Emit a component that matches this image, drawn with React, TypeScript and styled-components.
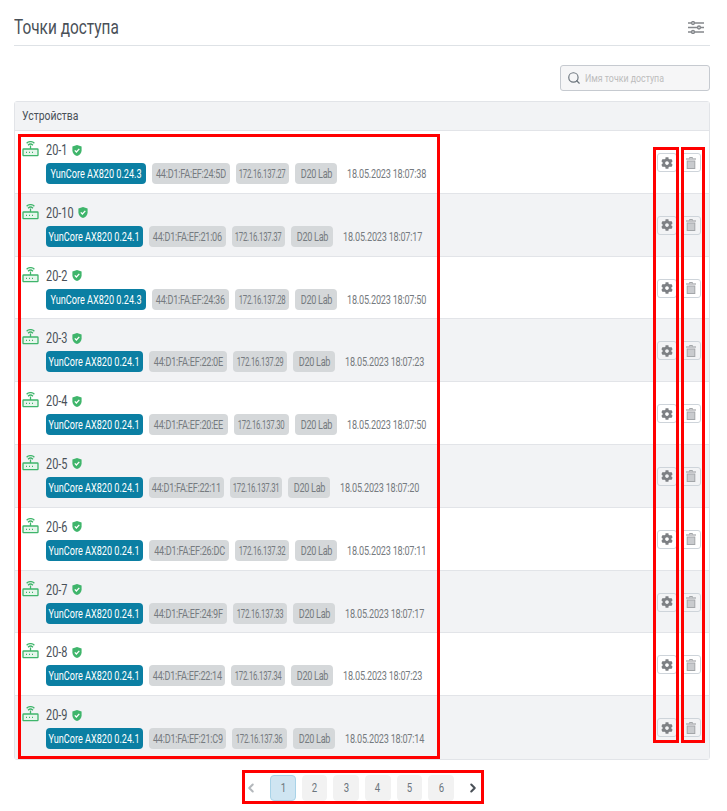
import styled, { createGlobalStyle } from 'styled-components';
import { ChevronLeft, ChevronRight, Search } from 'lucide-react';
import { FaCog } from 'react-icons/fa';

const GlobalStyle = createGlobalStyle`
    html, body {
        margin: 0;
        background: #fff;
        font-family: 'Roboto', 'Liberation Sans', sans-serif;
        color: #495057;
    }
`;

// tag widths come from the text, the digits of the original font are not all the same width
const devices = [
    { name: '20-1', fw: 'YunCore AX820 0.24.3', fwW: 100, mac: '44:D1:FA:EF:24:5D', macW: 78, ip: '172.16.137.27', ipW: 53, date: '18.05.2023 18:07:38' },
    { name: '20-10', fw: 'YunCore AX820 0.24.1', fwW: 97, mac: '44:D1:FA:EF:21:06', macW: 77, ip: '172.16.137.37', ipW: 53, date: '18.05.2023 18:07:17' },
    { name: '20-2', fw: 'YunCore AX820 0.24.3', fwW: 100, mac: '44:D1:FA:EF:24:36', macW: 77, ip: '172.16.137.28', ipW: 54, date: '18.05.2023 18:07:50' },
    { name: '20-3', fw: 'YunCore AX820 0.24.1', fwW: 97, mac: '44:D1:FA:EF:22:0E', macW: 78, ip: '172.16.137.29', ipW: 54, date: '18.05.2023 18:07:23' },
    { name: '20-4', fw: 'YunCore AX820 0.24.1', fwW: 97, mac: '44:D1:FA:EF:20:EE', macW: 79, ip: '172.16.137.30', ipW: 55, date: '18.05.2023 18:07:50' },
    { name: '20-5', fw: 'YunCore AX820 0.24.1', fwW: 97, mac: '44:D1:FA:EF:22:11', macW: 75, ip: '172.16.137.31', ipW: 52, date: '18.05.2023 18:07:20' },
    { name: '20-6', fw: 'YunCore AX820 0.24.1', fwW: 97, mac: '44:D1:FA:EF:26:DC', macW: 80, ip: '172.16.137.32', ipW: 54, date: '18.05.2023 18:07:11' },
    { name: '20-7', fw: 'YunCore AX820 0.24.1', fwW: 97, mac: '44:D1:FA:EF:24:9F', macW: 78, ip: '172.16.137.33', ipW: 54, date: '18.05.2023 18:07:17' },
    { name: '20-8', fw: 'YunCore AX820 0.24.1', fwW: 97, mac: '44:D1:FA:EF:22:14', macW: 76, ip: '172.16.137.34', ipW: 54, date: '18.05.2023 18:07:23' },
    { name: '20-9', fw: 'YunCore AX820 0.24.1', fwW: 97, mac: '44:D1:FA:EF:21:C9', macW: 77, ip: '172.16.137.36', ipW: 55, date: '18.05.2023 18:07:14' },
];

const RouterIcon = () => (
    <svg width="17" height="16" viewBox="0 0 17 16" fill="none" stroke="#3fb56b" strokeWidth="1.3">
        <rect x="1" y="8" width="15" height="6.6" rx="0.6" fill="#e6f6ec" />
        <path d="M8.5 8V4.5" />
        <path d="M6 4.2a3.6 3.6 0 0 1 5 0" />
        <path d="M4.6 2.2a5.6 5.6 0 0 1 7.8 0" />
        <path d="M4 11.3h1M7 11.3h1M10 11.3h1" />
    </svg>
);

const ShieldIcon = () => (
    <svg width="10" height="11" viewBox="0 0 10 11">
        <path d="M5 0L9.6 1.6V5.4C9.6 8 7.6 10 5 11C2.4 10 .4 8 .4 5.4V1.6Z" fill="#3fb56b" />
        <path d="M2.8 5.4L4.4 7L7.3 3.9" fill="none" stroke="#fff" strokeWidth="1.3" />
    </svg>
);

const TrashIcon = () => (
    <svg width="10" height="12" viewBox="0 0 10 12">
        <path d="M3.5 1.5V.5h3v1" fill="none" stroke="#a3a6a9" strokeWidth="1" />
        <path d="M0 2h10" stroke="#a3a6a9" strokeWidth="1.2" />
        <rect x="1.2" y="4" width="7.6" height="7.5" fill="#c9cbce" stroke="#a3a6a9" strokeWidth="1" />
    </svg>
);

const FilterIcon = () => (
    <svg width="16" height="13" viewBox="0 0 16 13" fill="#fff" stroke="#85888c" strokeWidth="1.5">
        <path d="M0 2h16M0 6.5h16M0 11h16" />
        <circle cx="5" cy="2" r="1.4" />
        <circle cx="11" cy="6.5" r="1.4" />
        <circle cx="5" cy="11" r="1.4" />
    </svg>
);

export default function App() {
    return (
        <Page>
            <GlobalStyle />
            <Header>
                <Title>Точки доступа</Title>
                <FilterIcon />
            </Header>
            <SearchRow>
                <SearchBox>
                    <Search size={14} color="#6c757d" />
                    <SearchText>Имя точки доступа</SearchText>
                </SearchBox>
            </SearchRow>
            <Card>
                <CardHead>
                    <HeadText>Устройства</HeadText>
                </CardHead>
                {devices.map((d, i) => (
                    <Row key={d.name} $odd={i % 2 === 1}>
                        <RouterIcon />
                        <Info>
                            <NameLine>
                                <Name $chars={d.name.length}>{d.name}</Name>
                                <ShieldIcon />
                            </NameLine>
                            <Tags>
                                <Tag $blue $w={d.fwW}>
                                    <TagText>{d.fw}</TagText>
                                </Tag>
                                <Tag $w={d.macW}>
                                    <TagText $spacing={-0.35}>{d.mac}</TagText>
                                </Tag>
                                <Tag $w={d.ipW}>
                                    <TagText $spacing={-0.4} $scale={0.6}>{d.ip}</TagText>
                                </Tag>
                                <Tag $w={42}>
                                    <TagText $spacing={-0.4}>D20 Lab</TagText>
                                </Tag>
                                <DateText>{d.date}</DateText>
                            </Tags>
                        </Info>
                        <Actions>
                            <IconButton>
                                <FaCog size={12} color="#7d8084" />
                            </IconButton>
                            <IconButton>
                                <TrashIcon />
                            </IconButton>
                        </Actions>
                    </Row>
                ))}
            </Card>
            <Pager>
                <ChevronLeft size={14} strokeWidth={3.5} color="#b4b8bc" />
                <PageGroup>
                    {[1, 2, 3, 4, 5, 6].map((p) => (
                        <PageButton key={p} $active={p === 1}>
                            <PageNum>{p}</PageNum>
                        </PageButton>
                    ))}
                </PageGroup>
                <ChevronRight size={14} strokeWidth={3.5} color="#495057" />
            </Pager>
            <Mark $left={18} $top={134} $w={422} $h={625} />
            <Mark $left={653} $top={147} $w={26} $h={596} />
            <Mark $left={681} $top={147} $w={24} $h={596} />
            <Mark $left={242} $top={770} $w={242} $h={34} />
        </Page>
    );
}

const Page = styled.div`
    position: relative;
    width: 727px;
    height: 811px;
    padding: 0 17px 0 14px;
    box-sizing: border-box;
    overflow: hidden;
`;

const Header = styled.div`
    height: 46px;
    border-bottom: 1px solid #dee2e6;
    display: flex;
    align-items: center;
    justify-content: space-between;
    padding: 9px 6px 0 0;
    box-sizing: border-box;
`;

const Title = styled.div`
    font-size: 20px;
    color: #495057;
    transform: scaleX(0.77);
    transform-origin: left center;
`;

const SearchRow = styled.div`
    display: flex;
    justify-content: flex-end;
    padding-top: 19px;
`;

const SearchBox = styled.div`
    width: 150px;
    height: 26px;
    box-sizing: border-box;
    border: 1px solid #c6cad0;
    border-radius: 3px;
    background: #f6f6f7;
    display: flex;
    align-items: center;
    gap: 4px;
    padding-left: 6px;
`;

const SearchText = styled.span`
    font-size: 11px;
    color: #bdbdbd;
    white-space: nowrap;
    transform: scaleX(0.8);
    transform-origin: left center;
`;

const Card = styled.div`
    margin-top: 10px;
    border: 1px solid #e2e4e8;
    border-radius: 3px;
`;

const CardHead = styled.div`
    height: 28px;
    background: #f2f3f5;
    border-bottom: 1px solid #e2e4e8;
    line-height: 28px;
    padding-left: 7px;
`;

const HeadText = styled.div`
    font-size: 13px;
    color: #495057;
    transform: scaleX(0.8);
    transform-origin: left center;
`;

const Row = styled.div<{ $odd?: boolean }>`
    height: 62.8px;
    box-sizing: border-box;
    display: flex;
    align-items: flex-start;
    padding: 10px 8px 0 7px;
    background: ${(p) => (p.$odd ? '#f2f3f5' : '#fff')};
    border-bottom: 1px solid #e2e4e8;
    &:last-child {
        border-bottom: none;
    }
`;

const Info = styled.div`
    margin-left: 7px;
    flex: 1;
`;

const NameLine = styled.div`
    display: flex;
    align-items: center;
    gap: 5px;
    height: 18px;
`;

const Name = styled.span<{ $chars: number }>`
    width: ${(p) => p.$chars * 6 - 3}px;
    font-size: 14px;
    color: #495057;
    white-space: nowrap;
    transform: scaleX(0.78);
    transform-origin: left center;
`;

const Tags = styled.div`
    display: flex;
    align-items: center;
    gap: 6px;
    margin-top: 4px;
`;

const Tag = styled.div<{ $blue?: boolean; $w: number }>`
    width: ${(p) => p.$w}px;
    height: 21px;
    border-radius: 4px;
    display: flex;
    align-items: center;
    justify-content: center;
    background: ${(p) => (p.$blue ? '#0b7fa3' : '#d5d8da')};
    color: ${(p) => (p.$blue ? '#fff' : '#767b80')};
`;

const TagText = styled.span<{ $spacing?: number; $scale?: number }>`
    font-size: 13px;
    letter-spacing: ${(p) => p.$spacing ?? 0}px;
    white-space: nowrap;
    transform: scaleX(${(p) => p.$scale ?? 0.7});
`;

const DateText = styled.span`
    font-size: 13px;
    color: #767b80;
    margin-left: 4px;
    letter-spacing: -0.3px;
    white-space: nowrap;
    transform: scaleX(0.7);
    transform-origin: left center;
`;

const Actions = styled.div`
    display: flex;
    gap: 4px;
    margin-top: 12px;
`;

const IconButton = styled.div`
    width: 20px;
    height: 19px;
    box-sizing: border-box;
    border: 1px solid #ced4da;
    border-radius: 3px;
    display: flex;
    align-items: center;
    justify-content: center;
`;

const Pager = styled.div`
    display: flex;
    align-items: center;
    justify-content: center;
    gap: 12px;
    margin-top: 15px;
`;

const PageGroup = styled.div`
    display: flex;
    gap: 6px;
`;

const PageButton = styled.div<{ $active?: boolean }>`
    width: 25.6px;
    height: 26px;
    box-sizing: border-box;
    border-radius: 4px;
    display: flex;
    align-items: center;
    justify-content: center;
    color: #6c757d;
    background: ${(p) => (p.$active ? '#cfe5f2' : '#f2f2f2')};
    border: 1px solid ${(p) => (p.$active ? '#a9d3e8' : '#f2f2f2')};
`;

const PageNum = styled.span`
    font-size: 12px;
    transform: scaleX(0.8);
`;

const Mark = styled.div<{ $left: number; $top: number; $w: number; $h: number }>`
    position: absolute;
    left: ${(p) => p.$left}px;
    top: ${(p) => p.$top}px;
    width: ${(p) => p.$w}px;
    height: ${(p) => p.$h}px;
    box-sizing: border-box;
    border: 3px solid #f00;
    pointer-events: none;
`;
